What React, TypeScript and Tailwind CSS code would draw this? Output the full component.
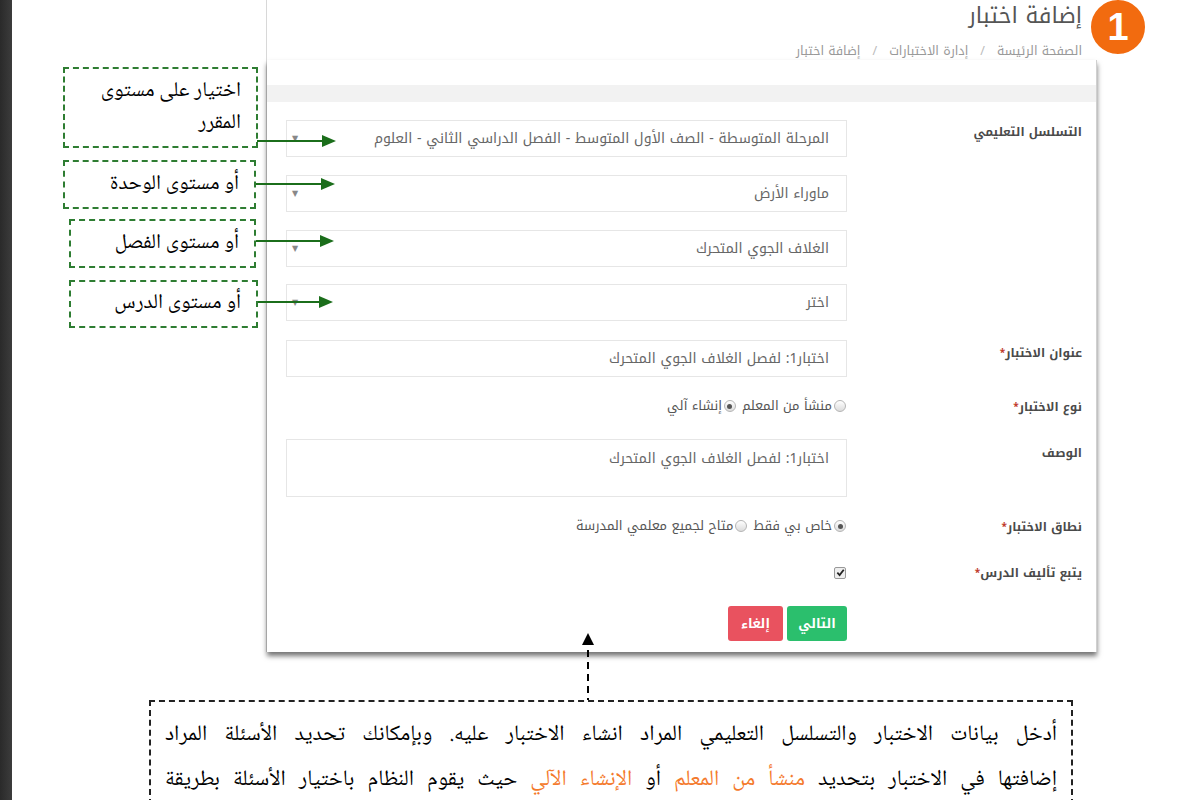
import React from "react";

const uiFont = "font-['Noto_Kufi_Arabic','Noto_Sans_Arabic','DejaVu_Sans',sans-serif]";
const docFont = "font-['Noto_Naskh_Arabic','Noto_Sans_Arabic','DejaVu_Sans',serif]";

function Select({ text }: { text: string }) {
  return (
    <div className="h-[37px] w-[561px] border border-[#e6e6e6] bg-white flex items-center justify-between pr-[17px] pl-[5px] text-[14px] text-[#666]">
      <span>{text}</span>
      <span className="text-[8px] text-[#888] leading-none">▼</span>
    </div>
  );
}

function Radio({ checked }: { checked?: boolean }) {
  return (
    <span className="inline-flex w-[12px] h-[12px] rounded-full border border-[#b5b5b5] bg-gradient-to-b from-white to-[#dcdcdc] items-center justify-center shrink-0">
      {checked && <span className="w-[5px] h-[5px] rounded-full bg-[#555]" />}
    </span>
  );
}

function Label({ text, req, pt }: { text: string; req?: boolean; pt: string }) {
  return (
    <div className={`w-[249px] pr-[14px] text-[12px] font-bold text-[#4a4a4a] leading-[20px] ${pt}`}>
      {text}
      {req && <span className="text-[#c0392b] text-[10px] align-top">*</span>}
    </div>
  );
}

function Callout({ lines, cls }: { lines: string[]; cls: string }) {
  return (
    <div
      className={`absolute border-2 border-dashed border-[#2e7d32] bg-white text-[21px] text-black leading-[32px] flex flex-col justify-center items-end pr-[15px] ${docFont} ${cls}`}
      dir="rtl"
    >
      {lines.map((l, i) => (
        <div key={i} className="w-full text-right">{l}</div>
      ))}
    </div>
  );
}

function Arrow({ top, left, width }: { top: number; left: number; width: number }) {
  return (
    <svg className="absolute" style={{ top: top - 8, left }} width={width} height={16} viewBox={`0 0 ${width} 16`}>
      <line x1="0" y1="8" x2={width - 12} y2="8" stroke="#1b6e1b" strokeWidth="2" />
      <polygon points={`${width - 14},2 ${width},8 ${width - 14},14`} fill="#1b6e1b" />
    </svg>
  );
}

export default function App() {
  return (
    <div className="relative w-[1200px] h-[800px] overflow-hidden bg-white flex">
      <div className="w-[12px] h-full bg-gradient-to-r from-[#2a2a2a] to-[#3c3c3c] shrink-0" />
      <div className="flex-1 flex flex-col">
        {/* screenshot card */}
        <div className={`ml-[254px] w-[831px] border-l border-[#d8d8d8] ${uiFont}`} dir="rtl">
          <div className="h-[60px] pr-[15px] flex flex-col items-start">
            <div className="text-[22px] text-[#555] leading-[28px] mt-[2px]">إضافة اختبار</div>
            <div className="text-[12.5px] text-[#999] leading-[18px] mt-[12px] flex gap-[12px]">
              <span>الصفحة الرئيسة</span>
              <span className="text-[#bbb]">/</span>
              <span>إدارة الاختبارات</span>
              <span className="text-[#bbb]">/</span>
              <span>إضافة اختبار</span>
            </div>
          </div>
          <div className="border-r border-[#d0d0d0] shadow-[0_4px_5px_rgba(0,0,0,0.55)] bg-white">
            <div className="h-[25px]" />
            <div className="h-[17px] bg-[#f2f2f2]" />
            <div className="flex flex-col pb-[11px]">
              <div className="flex mt-[18px]">
                <Label text="التسلسل التعليمي" pt="pt-[2px]" />
                <div className="flex flex-col">
                  <Select text="المرحلة المتوسطة - الصف الأول المتوسط - الفصل الدراسي الثاني - العلوم" />
                  <div className="mt-[18px]"><Select text="ماوراء الأرض" /></div>
                  <div className="mt-[18px]"><Select text="الغلاف الجوي المتحرك" /></div>
                  <div className="mt-[17px]"><Select text="اختر" /></div>
                </div>
              </div>
              <div className="flex mt-[19px]">
                <Label text="عنوان الاختبار" req pt="pt-[3px]" />
                <div className="h-[37px] w-[561px] border border-[#e6e6e6] flex items-center pr-[17px] text-[14px] text-[#666]">
                  اختبار1: لفصل الغلاف الجوي المتحرك
                </div>
              </div>
              <div className="flex mt-[19px] items-center h-[20px]">
                <Label text="نوع الاختبار" req pt="pt-[1px]" />
                <div className="flex items-center gap-[2px] text-[13px] text-[#555] pr-[1px]">
                  <Radio />
                  <span>منشأ من المعلم</span>
                  <span className="w-[2px]" />
                  <Radio checked />
                  <span>إنشاء آلي</span>
                </div>
              </div>
              <div className="flex mt-[23px]">
                <Label text="الوصف" pt="pt-[4px]" />
                <div className="h-[58px] w-[561px] border border-[#e6e6e6] pr-[17px] pt-[9px] text-[14px] text-[#666] leading-[20px]">
                  اختبار1: لفصل الغلاف الجوي المتحرك
                </div>
              </div>
              <div className="flex mt-[19px] items-center h-[20px]">
                <Label text="نطاق الاختبار" req pt="pt-[1px]" />
                <div className="flex items-center gap-[2px] text-[13px] text-[#555] pr-[1px]">
                  <Radio checked />
                  <span>خاص بي فقط</span>
                  <span className="w-[2px]" />
                  <Radio />
                  <span>متاح لجميع معلمي المدرسة</span>
                </div>
              </div>
              <div className="flex mt-[26px] items-center h-[20px]">
                <Label text="يتبع تأليف الدرس" req pt="pt-[1px]" />
                <div className="pr-[1px]">
                  <span className="inline-flex w-[12px] h-[12px] border border-[#999] rounded-[2px] bg-[#eee] items-center justify-center">
                    <svg width="9" height="9" viewBox="0 0 10 10">
                      <path d="M1.5 5.2 L4 7.8 L8.6 2" stroke="#222" strokeWidth="2" fill="none" />
                    </svg>
                  </span>
                </div>
              </div>
              <div className="flex mt-[24px]">
                <div className="w-[249px]" />
                <div className="flex gap-[4px]">
                  <div className="h-[35px] w-[60px] rounded-[3px] bg-[#2bbf6d] text-white text-[13px] font-bold flex items-center justify-center">التالي</div>
                  <div className="h-[35px] w-[55px] rounded-[3px] bg-[#e9525f] text-white text-[13px] font-bold flex items-center justify-center">إلغاء</div>
                </div>
              </div>
            </div>
          </div>
        </div>
        {/* bottom explanatory box */}
        <div
          className={`ml-[137px] mt-[48px] w-[924px] h-[140px] border-2 border-dashed border-[#222] px-[14px] pt-[11px] text-[22px] text-black leading-[45px] ${docFont}`}
          dir="rtl"
        >
          <div className="text-justify [text-align-last:justify] whitespace-nowrap">
            أدخل بيانات الاختبار والتسلسل التعليمي المراد انشاء الاختبار عليه. وبإمكانك تحديد الأسئلة المراد
          </div>
          <div className="text-justify [text-align-last:justify] whitespace-nowrap">
            إضافتها في الاختبار بتحديد <span className="text-[#f47a2c]">منشأ من المعلم</span> أو{" "}
            <span className="text-[#f47a2c]">الإنشاء الآلي</span> حيث يقوم النظام باختيار الأسئلة بطريقة
          </div>
        </div>
      </div>

      {/* orange step badge */}
      <div className="absolute left-[1089px] top-[-2px] w-[58px] h-[58px] rounded-full bg-[#f26b0f] border-2 border-white flex items-center justify-center text-white text-[38px] font-bold font-['Liberation_Sans',sans-serif]">
        1
      </div>

      {/* callouts */}
      <Callout lines={["اختيار على مستوى", "المقرر"]} cls="left-[63px] top-[67px] w-[195px] h-[81px]" />
      <Callout lines={["أو مستوى الوحدة"]} cls="left-[63px] top-[160px] w-[193px] h-[49px]" />
      <Callout lines={["أو مستوى الفصل"]} cls="left-[69px] top-[219px] w-[187px] h-[49px]" />
      <Callout lines={["أو مستوى الدرس"]} cls="left-[69px] top-[280px] w-[189px] h-[48px]" />
      <Arrow top={141} left={257} width={79} />
      <Arrow top={184} left={256} width={79} />
      <Arrow top={241} left={256} width={78} />
      <Arrow top={302} left={258} width={75} />

      {/* dashed up arrow */}
      <svg className="absolute left-[580px] top-[632px]" width="16" height="68" viewBox="0 0 16 68">
        <polygon points="8,1 14,13 2,13" fill="#000" />
        <line x1="8" y1="18" x2="8" y2="68" stroke="#000" strokeWidth="2" strokeDasharray="7 5" />
      </svg>
    </div>
  );
}
